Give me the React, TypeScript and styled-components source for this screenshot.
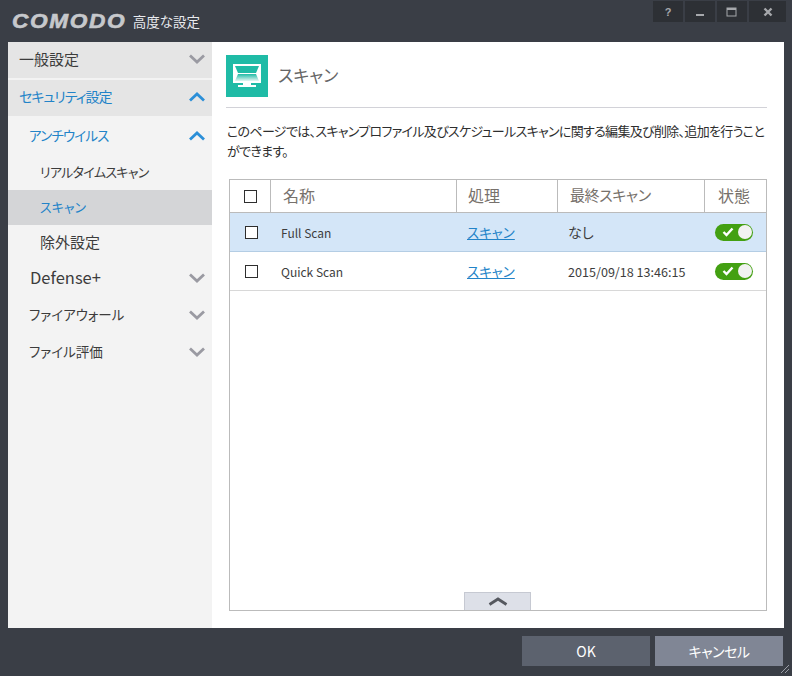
import React from 'react'
import styled, { createGlobalStyle } from 'styled-components'

const FONT = `"Noto Sans CJK JP", "Noto Sans", sans-serif`
const COLUMNS = '41px 186px 101px 147px 1fr'

const GlobalStyle = createGlobalStyle`
  html, body {
    margin: 0;
    padding: 0;
    background: #3a3e46;
  }
  body {
    font-family: ${FONT};
    font-feature-settings: 'palt';
  }
`

const Window = styled.div`
  position: relative;
  width: 792px;
  height: 676px;
  display: flex;
  flex-direction: column;
  overflow: hidden;
  background: #3a3e46;
`

const TitleBar = styled.div`
  height: 42px;
  flex-shrink: 0;
  display: flex;
  align-items: flex-start;
  justify-content: space-between;
  padding: 1px 6px 0 12px;
  box-sizing: border-box;
`

const Brand = styled.div`
  display: flex;
  align-items: center;
  gap: 7px;
  height: 40px;
`

const Logo = styled.span`
  font-family: 'Liberation Sans', sans-serif;
  font-size: 21px;
  font-weight: 700;
  font-style: italic;
  letter-spacing: 1.5px;
  color: #c6c8cc;
  -webkit-text-stroke: 0.6px #c6c8cc;
  transform: scaleX(1.08);
  transform-origin: left center;
  margin-right: 8px;
`

const WindowTitle = styled.span`
  font-size: 13.5px;
  color: #e8eaee;
`

const Controls = styled.div`
  display: flex;
  gap: 2px;
`

const ControlButton = styled.div<{ $wide?: boolean }>`
  width: ${(p) => (p.$wide ? 37 : 30)}px;
  height: 21px;
  background: #2d3035;
  display: flex;
  align-items: center;
  justify-content: center;
  color: #a6a8ac;
  font-size: 11px;
  font-weight: 700;
  font-family: 'Liberation Sans', sans-serif;
`

const Body = styled.div`
  height: 586px;
  flex-shrink: 0;
  margin: 0 8px;
  display: flex;
  background: #fff;
`

const Sidebar = styled.nav`
  width: 204px;
  flex-shrink: 0;
  background: #f3f3f3;
`

const TopItem = styled.div<{ $active?: boolean; $size?: number; $tight?: number }>`
  height: 36px;
  margin-bottom: 2px;
  padding: 0 7px 4px 11px;
  box-sizing: border-box;
  display: flex;
  align-items: center;
  justify-content: space-between;
  background: #e5e5e5;
  font-size: ${(p) => p.$size ?? 14}px;
  letter-spacing: ${(p) => p.$tight ?? 0}px;
  color: ${(p) => (p.$active ? '#2283c8' : '#3c3c3c')};
`

const SubItem = styled.div<{ $active?: boolean; $size?: number; $left?: number; $tight?: number }>`
  height: 37px;
  padding: 0 7px 4px ${(p) => p.$left ?? 21}px;
  box-sizing: border-box;
  display: flex;
  align-items: center;
  justify-content: space-between;
  font-size: ${(p) => p.$size ?? 13.5}px;
  letter-spacing: ${(p) => p.$tight ?? 0}px;
  color: ${(p) => (p.$active ? '#2283c8' : '#3c3c3c')};
`

const LeafItem = styled.div<{ $selected?: boolean; $size?: number; $tight?: number }>`
  height: 35px;
  padding: 0 0 3px 32px;
  box-sizing: border-box;
  display: flex;
  align-items: center;
  font-size: ${(p) => p.$size ?? 13}px;
  letter-spacing: ${(p) => p.$tight ?? 0}px;
  background: ${(p) => (p.$selected ? '#d4d5d7' : 'transparent')};
  color: ${(p) => (p.$selected ? '#2283c8' : '#3c3c3c')};
`

const ChevronMark = styled.svg`
  margin-top: 2px;
  flex-shrink: 0;
`

const Content = styled.main`
  flex: 1;
  min-width: 0;
  padding: 13px 17px 17px 14px;
  display: flex;
  flex-direction: column;
`

const PageHeader = styled.header`
  display: flex;
  align-items: center;
  gap: 10px;
  height: 53px;
  padding-bottom: 11px;
  box-sizing: border-box;
  border-bottom: 1px solid #d2d2d8;
`

const IconTile = styled.div`
  width: 42px;
  height: 42px;
  background: #1fbba6;
  display: flex;
  align-items: center;
  justify-content: center;
`

const PageTitle = styled.h1`
  margin: 0 0 2px;
  font-size: 17px;
  font-weight: 400;
  color: #666666;
`

const Description = styled.p`
  margin: 13px 0 18px;
  padding-left: 1px;
  font-size: 13px;
  letter-spacing: -0.68px;
  line-height: 20px;
  color: #2e2e2e;
`

const TableFrame = styled.div`
  position: relative;
  flex: 1;
  margin-left: 3px;
  border: 1px solid #bbbbbb;
  background: #fff;
`

const Row = styled.div<{ $selected?: boolean }>`
  display: grid;
  grid-template-columns: ${COLUMNS};
  height: 39px;
  box-sizing: border-box;
  border-bottom: 1px solid ${(p) => (p.$selected ? '#b4cde4' : '#d8d8d8')};
  background: ${(p) => (p.$selected ? '#d4e6f8' : '#fff')};
`

const HeaderRow = styled.div`
  display: grid;
  grid-template-columns: ${COLUMNS};
  height: 33px;
  box-sizing: border-box;
  border-bottom: 1px solid #bbbbbb;
`

const HeaderCell = styled.div<{ $last?: boolean; $center?: boolean; $left?: number }>`
  display: flex;
  align-items: center;
  justify-content: ${(p) => (p.$center ? 'center' : 'flex-start')};
  padding-left: ${(p) => p.$left ?? 0}px;
  border-right: ${(p) => (p.$last ? 'none' : '1px solid #bbbbbb')};
  color: #77716c;
`

const HeaderLabel = styled.span<{ $size?: number; $tight?: number }>`
  margin-bottom: 3px;
  font-size: ${(p) => p.$size ?? 16}px;
  letter-spacing: ${(p) => p.$tight ?? 0}px;
`

const Cell = styled.div<{ $center?: boolean; $left?: number; $size?: number }>`
  display: flex;
  align-items: center;
  justify-content: ${(p) => (p.$center ? 'center' : 'flex-start')};
  padding-left: ${(p) => p.$left ?? 0}px;
  font-size: ${(p) => p.$size ?? 12}px;
  color: #3d3d3d;
`

const Check = styled.span`
  display: block;
  width: 11px;
  height: 11px;
  border: 1px solid #2e2e2e;
  background: #fff;
`

const ActionLink = styled.a`
  font-size: 13.5px;
  color: #2283c8;
  text-decoration: underline;
`

const Toggle = styled.span`
  width: 38px;
  height: 17px;
  margin-right: 3px;
  border-radius: 9px;
  background: #43a012;
  display: flex;
  align-items: center;
  justify-content: space-between;
  padding: 0 1px 0 7px;
  box-sizing: border-box;
`

const Knob = styled.span`
  width: 14px;
  height: 14px;
  border-radius: 50%;
  background: #f2f2f2;
`

const ScrollHandle = styled.div`
  position: absolute;
  left: 234px;
  bottom: 0;
  width: 67px;
  height: 18px;
  box-sizing: border-box;
  border: 1px solid #c6c9d2;
  border-bottom: none;
  background: #dde0e8;
  display: flex;
  align-items: center;
  justify-content: center;
`

const Footer = styled.footer`
  flex: 1;
  display: flex;
  justify-content: flex-end;
  gap: 5px;
  padding: 8px 9px 0 0;
`

const FooterButton = styled.button<{ $muted?: boolean }>`
  width: 128px;
  height: 30px;
  border: none;
  padding: 0;
  font-family: ${FONT};
  font-feature-settings: 'palt';
  font-size: 14px;
  letter-spacing: ${(p) => (p.$muted ? -0.5 : 0)}px;
  color: #fff;
  background: ${(p) => (p.$muted ? '#808695' : '#5c626e')};
`

const Grip = styled.svg`
  position: absolute;
  right: 2px;
  bottom: 2px;
`

const Chevron = ({ up, color }: { up?: boolean; color: string }) => (
  <ChevronMark width="16" height="10" viewBox="0 0 16 10">
    <path
      d={up ? 'M1 8.5 L8 2 L15 8.5' : 'M1 1.5 L8 8 L15 1.5'}
      fill="none"
      stroke={color}
      strokeWidth="2.8"
    />
  </ChevronMark>
)

const GREY = '#9a9aa2'
const BLUE = '#2b8fd8'

const MonitorIcon = () => (
  <svg width="28" height="24" viewBox="0 0 28 24">
    <defs>
      <linearGradient id="screen" x1="0" y1="0" x2="0" y2="1">
        <stop offset="0" stopColor="#1fbba6" />
        <stop offset="1" stopColor="#e4f6f3" />
      </linearGradient>
    </defs>
    <rect x="0" y="0" width="28" height="19" fill="#fff" />
    <path d="M2 2 H26 L23 9 H5 Z" fill="#1fbba6" />
    <path d="M5 10 H23 L26 17 H2 Z" fill="url(#screen)" />
    <rect x="10" y="19" width="8" height="2" fill="#fff" />
    <rect x="5" y="21" width="18" height="2" fill="#fff" />
  </svg>
)

const TickIcon = () => (
  <svg width="12" height="10" viewBox="0 0 12 10">
    <path d="M1.5 5 L4.5 8 L10.5 1.5" fill="none" stroke="#fff" strokeWidth="2.4" />
  </svg>
)

const App: React.FC = () => (
  <Window>
    <GlobalStyle />
    <TitleBar>
      <Brand>
        <Logo>COMODO</Logo>
        <WindowTitle>高度な設定</WindowTitle>
      </Brand>
      <Controls>
        <ControlButton>?</ControlButton>
        <ControlButton>
          <svg width="10" height="10" viewBox="0 0 10 10">
            <rect x="1" y="7" width="8" height="2" fill="#a6a8ac" />
          </svg>
        </ControlButton>
        <ControlButton>
          <svg width="12" height="10" viewBox="0 0 12 10">
            <rect x="1" y="1" width="9" height="8" fill="none" stroke="#a6a8ac" />
            <rect x="1" y="1" width="9" height="2" fill="#a6a8ac" />
          </svg>
        </ControlButton>
        <ControlButton $wide>
          <svg width="10" height="10" viewBox="0 0 10 10">
            <path d="M1.5 1.5 L8.5 8.5 M8.5 1.5 L1.5 8.5" stroke="#a6a8ac" strokeWidth="2.4" />
          </svg>
        </ControlButton>
      </Controls>
    </TitleBar>

    <Body>
      <Sidebar>
        <TopItem $size={15}>
          一般設定
          <Chevron color={GREY} />
        </TopItem>
        <TopItem $active $tight={-1}>
          セキュリティ設定
          <Chevron up color={BLUE} />
        </TopItem>
        <SubItem $active $tight={-0.8}>
          アンチウイルス
          <Chevron up color={BLUE} />
        </SubItem>
        <LeafItem $tight={-0.7}>リアルタイムスキャン</LeafItem>
        <LeafItem $selected>スキャン</LeafItem>
        <LeafItem $size={15}>除外設定</LeafItem>
        <SubItem $size={16.5} $left={22}>
          Defense+
          <Chevron color={GREY} />
        </SubItem>
        <SubItem>
          ファイアウォール
          <Chevron color={GREY} />
        </SubItem>
        <SubItem>
          ファイル評価
          <Chevron color={GREY} />
        </SubItem>
      </Sidebar>

      <Content>
        <PageHeader>
          <IconTile>
            <MonitorIcon />
          </IconTile>
          <PageTitle>スキャン</PageTitle>
        </PageHeader>
        <Description>
          このページでは、スキャンプロファイル及びスケジュールスキャンに関する編集及び削除、追加を行うことができます。
        </Description>
        <TableFrame>
          <HeaderRow>
            <HeaderCell $center>
              <Check />
            </HeaderCell>
            <HeaderCell $left={12}>
              <HeaderLabel>名称</HeaderLabel>
            </HeaderCell>
            <HeaderCell $left={11}>
              <HeaderLabel>処理</HeaderLabel>
            </HeaderCell>
            <HeaderCell $left={12}>
              <HeaderLabel $size={15} $tight={-0.4}>
                最終スキャン
              </HeaderLabel>
            </HeaderCell>
            <HeaderCell $last $left={13}>
              <HeaderLabel>状態</HeaderLabel>
            </HeaderCell>
          </HeaderRow>
          <Row $selected>
            <Cell $center $left={2}>
              <Check />
            </Cell>
            <Cell $left={10}>Full Scan</Cell>
            <Cell $left={10}>
              <ActionLink>スキャン</ActionLink>
            </Cell>
            <Cell $left={10} $size={14}>
              なし
            </Cell>
            <Cell $center>
              <Toggle>
                <TickIcon />
                <Knob />
              </Toggle>
            </Cell>
          </Row>
          <Row>
            <Cell $center $left={2}>
              <Check />
            </Cell>
            <Cell $left={10}>Quick Scan</Cell>
            <Cell $left={10}>
              <ActionLink>スキャン</ActionLink>
            </Cell>
            <Cell $left={10} $size={12.6}>
              2015/09/18 13:46:15
            </Cell>
            <Cell $center>
              <Toggle>
                <TickIcon />
                <Knob />
              </Toggle>
            </Cell>
          </Row>
          <ScrollHandle>
            <svg width="20" height="9" viewBox="0 0 20 9">
              <path d="M1.5 7.5 L10 2 L18.5 7.5" fill="none" stroke="#55585f" strokeWidth="2.8" />
            </svg>
          </ScrollHandle>
        </TableFrame>
      </Content>
    </Body>

    <Footer>
      <FooterButton>OK</FooterButton>
      <FooterButton $muted>キャンセル</FooterButton>
    </Footer>
    <Grip width="10" height="10" viewBox="0 0 10 10">
      <path d="M1 9 L9 1 M5 9 L9 5" stroke="#9a9ea6" strokeWidth="1" />
    </Grip>
  </Window>
)

export default App
